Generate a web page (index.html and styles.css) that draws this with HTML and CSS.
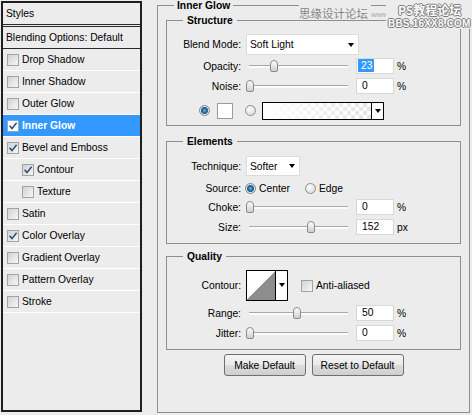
FILE: index.html
```html
<!DOCTYPE html>
<html lang="en">
<head>
<meta charset="utf-8">
<title>Layer Style - Inner Glow</title>
<link rel="stylesheet" href="styles.css">
</head>
<body>
<div class="app">
  <aside class="styles-panel">
    <div class="panel-title">Styles</div>
    <div class="blend-default">Blending Options: Default</div>
    <ul class="effect-list">
      <li class="effect"><span class="cb"></span>Drop Shadow</li>
      <li class="effect"><span class="cb"></span>Inner Shadow</li>
      <li class="effect"><span class="cb"></span>Outer Glow</li>
      <li class="effect selected"><span class="cb on"><svg viewBox="0 0 10 10"><path d="M1.6 4.8 L4 7.6 L8.6 1.8"/></svg></span>Inner Glow</li>
      <li class="effect"><span class="cb on"><svg viewBox="0 0 10 10"><path d="M1.6 4.8 L4 7.6 L8.6 1.8"/></svg></span>Bevel and Emboss</li>
      <li class="effect sub"><span class="cb on"><svg viewBox="0 0 10 10"><path d="M1.6 4.8 L4 7.6 L8.6 1.8"/></svg></span>Contour</li>
      <li class="effect sub"><span class="cb"></span>Texture</li>
      <li class="effect"><span class="cb"></span>Satin</li>
      <li class="effect"><span class="cb on"><svg viewBox="0 0 10 10"><path d="M1.6 4.8 L4 7.6 L8.6 1.8"/></svg></span>Color Overlay</li>
      <li class="effect"><span class="cb"></span>Gradient Overlay</li>
      <li class="effect"><span class="cb"></span>Pattern Overlay</li>
      <li class="effect"><span class="cb"></span>Stroke</li>
    </ul>
  </aside>

  <fieldset class="group main">
    <legend>Inner Glow</legend>

    <fieldset class="group sub-group structure">
      <legend>Structure</legend>
      <div class="row row-select">
        <span class="lbl">Blend Mode:</span>
        <div class="select select-blend"><span>Soft Light</span><i class="arrow"></i></div>
      </div>
      <div class="row row-slider first">
        <span class="lbl">Opacity:</span>
        <div class="slider"><span class="thumb" style="--v:0.25"></span></div>
        <div class="num selected"><span class="sel-text">23</span></div>
        <span class="unit">%</span>
      </div>
      <div class="row row-slider">
        <span class="lbl">Noise:</span>
        <div class="slider"><span class="thumb" style="--v:0"></span></div>
        <div class="num">0</div>
        <span class="unit">%</span>
      </div>
      <div class="row color-row">
        <span class="radio on"></span>
        <span class="swatch"></span>
        <span class="radio radio-grad"></span>
        <div class="grad-bar"><span class="grad-preview"></span><span class="drop-cell"><i class="arrow"></i></span></div>
      </div>
    </fieldset>

    <fieldset class="group sub-group elements">
      <legend>Elements</legend>
      <div class="row row-tech">
        <span class="lbl">Technique:</span>
        <div class="select select-tech"><span>Softer</span><i class="arrow"></i></div>
      </div>
      <div class="row row-source">
        <span class="lbl">Source:</span>
        <span class="radio on"></span><span class="opt">Center</span>
        <span class="radio radio-edge"></span><span class="opt">Edge</span>
      </div>
      <div class="row row-slider">
        <span class="lbl">Choke:</span>
        <div class="slider"><span class="thumb" style="--v:0"></span></div>
        <div class="num">0</div>
        <span class="unit">%</span>
      </div>
      <div class="row row-slider">
        <span class="lbl">Size:</span>
        <div class="slider"><span class="thumb" style="--v:0.65"></span></div>
        <div class="num">152</div>
        <span class="unit">px</span>
      </div>
    </fieldset>

    <fieldset class="group sub-group quality">
      <legend>Quality</legend>
      <div class="row row-contour">
        <span class="lbl">Contour:</span>
        <div class="contour-box"><span class="contour-plot"></span><span class="drop-cell"><i class="arrow"></i></span></div>
        <span class="cb aa"></span><span class="opt">Anti-aliased</span>
      </div>
      <div class="row row-slider">
        <span class="lbl">Range:</span>
        <div class="slider"><span class="thumb" style="--v:0.5"></span></div>
        <div class="num">50</div>
        <span class="unit">%</span>
      </div>
      <div class="row row-slider">
        <span class="lbl">Jitter:</span>
        <div class="slider"><span class="thumb" style="--v:0"></span></div>
        <div class="num">0</div>
        <span class="unit">%</span>
      </div>
    </fieldset>

    <div class="buttons">
      <button class="btn btn-make" type="button">Make Default</button>
      <button class="btn btn-reset" type="button">Reset to Default</button>
    </div>
  </fieldset>
</div>

<div class="wm-site">思缘设计论坛</div>
<div class="wm-url">www.</div>
<div class="wm-bbs">
  <div class="wm-ps">PS教程论坛</div>
  <div class="wm-addr">BBS.16XX8.COM</div>
</div>
</body>
</html>
```

FILE: styles.css
```css
* { box-sizing: border-box; }

html, body { margin: 0; padding: 0; }

body {
  position: relative;
  width: 472px;
  height: 415px;
  overflow: hidden;
  background: #ececec;
  color: #000;
  font-family: "Liberation Sans", Arial, sans-serif;
  font-size: 10.3px;
}

.app {
  display: flex;
  align-items: flex-start;
  gap: 15px;
  padding-left: 1px;
}

/* ---------- left styles list ---------- */
.styles-panel {
  margin-top: 1px;
  width: 141px;
  height: 411px;
  border: 2px solid #1e1e1e;
  background: #ececec;
  flex-shrink: 0;
}

.panel-title {
  height: 24px;
  line-height: 21px;
  padding-left: 3px;
  border-bottom: 3px double #2a2a2a;
}

.blend-default {
  height: 22px;
  line-height: 21px;
  padding-left: 3px;
  border-bottom: 1px solid #2a2a2a;
}

.effect-list { list-style: none; margin: 0; padding: 0; }

.effect {
  height: 22px;
  border-bottom: 1px solid #fff;
  display: flex;
  align-items: center;
  padding-left: 4px;
  gap: 3px;
  white-space: nowrap;
}

.effect.sub { padding-left: 19px; }

.effect.selected {
  background: #3399ff;
  color: #fff;
  font-weight: bold;
}

.cb {
  width: 12px;
  height: 12px;
  flex-shrink: 0;
  border: 1px solid #a2a2a2;
  background: linear-gradient(135deg, #d2d2d2, #f6f6f6);
  display: inline-flex;
}

.cb svg { width: 10px; height: 10px; }
.cb svg path { fill: none; stroke: #2a4a78; stroke-width: 1.5; }

.effect.selected .cb { background: #fff; border-color: #8aa9c9; }

/* ---------- group boxes ---------- */
.group {
  margin: 0;
  border: 1px solid #8e8e8e;
  min-width: 0;
}

.group > legend {
  font-weight: bold;
  line-height: 11px;
  padding: 0 3px;
}

.main {
  width: 313px;
  height: 413px;
  padding: 4px 8px 0;
  flex-shrink: 0;
}

.main > legend { margin-left: 8px; }

.sub-group > legend { margin-left: 16px; padding: 0 4px; }

.structure { padding: 8px 0 6px; }
.elements { margin-top: 10px; padding: 9px 0 8px; }
.quality { margin-top: 7px; padding: 8px 0 8px; }

/* ---------- rows ---------- */
.row {
  display: flex;
  align-items: center;
  white-space: nowrap;
}

.lbl {
  width: 74px;
  margin-right: 5px;
  text-align: right;
  flex-shrink: 0;
}

.row-select { height: 21px; }
.row-slider { height: 16px; margin-top: 4px; }
.row-slider.first { margin-top: 3px; }
.color-row { height: 17px; margin-top: 8px; padding-left: 32px; }
.row-tech { height: 20px; }
.row-source { height: 14px; margin-top: 5px; }
.row-contour { height: 31px; }

/* select boxes */
.select {
  height: 21px;
  display: flex;
  align-items: center;
  padding-left: 3px;
  background: #fff;
  border: 1px solid #dcdcdc;
}

.select-blend { width: 113px; }
.select-tech { width: 54px; height: 20px; }

.select .arrow { margin-left: auto; margin-right: 4px; }

.arrow {
  display: block;
  width: 0;
  height: 0;
  border-left: 3.5px solid transparent;
  border-right: 3.5px solid transparent;
  border-top: 4px solid #000;
}

/* sliders */
.slider {
  position: relative;
  width: 102px;
  height: 16px;
  flex-shrink: 0;
}

.slider::before {
  content: "";
  position: absolute;
  left: 3px;
  right: 0;
  top: 7px;
  height: 2px;
  border-top: 1px solid #a9a9a9;
  background: #fbfbfb;
}

.thumb {
  position: absolute;
  top: 2px;
  left: calc(var(--v) * 94px);
  width: 8px;
  height: 12px;
  border: 1px solid #8a8a8a;
  border-radius: 4px 4px 2px 2px;
  background: linear-gradient(#fdfdfd, #cfcfcf);
}

.num {
  width: 38px;
  height: 16px;
  margin-left: 8px;
  padding-left: 5px;
  line-height: 14px;
  background: #fff;
  border: 1px solid #d8d8d8;
  flex-shrink: 0;
}

.num.selected { padding-left: 1px; }

.sel-text {
  display: inline-block;
  height: 13px;
  line-height: 13px;
  padding: 0 2px 0 3px;
  background: #3399ff;
  color: #fff;
}

.unit { margin-left: 3px; }

/* radios */
.radio {
  width: 11px;
  height: 11px;
  border-radius: 50%;
  border: 1px solid #8f8f8f;
  background: radial-gradient(circle at 40% 35%, #ffffff, #d0d0d0);
  flex-shrink: 0;
}

.radio.on {
  border-color: #7d8790;
  background: radial-gradient(circle at 50% 50%, #6fb2e0 0, #1f5e90 2.6px, #2c6c9c 3.3px, #e9e9e9 3.9px, #cfcfcf 100%);
}

.swatch {
  width: 16px;
  height: 16px;
  margin-left: 7px;
  background: #fff;
  border: 1px solid #9a9a9a;
}

.radio-grad { margin-left: 12px; }

.grad-bar {
  width: 122px;
  height: 18px;
  margin-left: 6px;
  display: flex;
  border: 1px solid #000;
  background: #fff;
}

.grad-preview {
  flex: 1;
  background-image:
    linear-gradient(to right, #ffffff 0%, rgba(255,255,255,0.15) 100%),
    repeating-conic-gradient(#dedede 0 25%, #ffffff 0 50%);
  background-size: 100% 100%, 8px 8px;
}

.drop-cell {
  width: 12px;
  flex-shrink: 0;
  border-left: 1px solid #000;
  background: #fff;
  display: flex;
  align-items: center;
  justify-content: center;
}

.opt { margin-left: 3px; }
.row-source .radio.on { margin-left: -1px; }
.radio-edge { margin-left: 15px; }

/* contour */
.contour-box {
  width: 42px;
  height: 31px;
  display: flex;
  border: 1px solid #000;
  background: #fff;
  flex-shrink: 0;
}

.contour-plot {
  flex: 1;
  background: linear-gradient(to top left, #8d8d8d 50%, #ffffff 50%);
}

.contour-box .drop-cell { align-items: flex-start; padding-top: 12px; }

.cb.aa { margin-left: 13px; }

/* buttons */
.buttons {
  display: flex;
  justify-content: center;
  gap: 6px;
  margin-top: 4px;
}

.btn {
  height: 22px;
  padding: 0;
  font: inherit;
  color: #000;
  border: 1px solid #707070;
  border-radius: 3px;
  background: linear-gradient(#f4f4f4 0%, #ebebeb 48%, #dcdcdc 52%, #cfcfcf 100%);
}

.btn-make { width: 82px; }
.btn-reset { width: 92px; }

/* ---------- watermark overlay ---------- */
.wm-site {
  position: absolute;
  left: 299px;
  top: 0;
  width: 72px;
  height: 19px;
  padding-top: 7px;
  background: #ececec;
  color: #858585;
  font-family: "Noto Sans CJK SC", "Noto Sans", sans-serif;
  font-size: 11.5px;
  line-height: 12px;
  white-space: nowrap;
}

.wm-url {
  position: absolute;
  left: 371px;
  top: 10px;
  color: #a8a8a8;
  font-size: 8px;
  line-height: 9px;
  white-space: nowrap;
}

.wm-bbs {
  position: absolute;
  left: 386px;
  top: 0;
  width: 86px;
  height: 29px;
  background: #ececec;
  color: #fafafa;
  text-shadow: 1px 0 #7c7c7c, -1px 0 #7c7c7c, 0 1px #7c7c7c, 0 -1px #7c7c7c;
  white-space: nowrap;
}

.wm-ps {
  margin: 3px 0 0 12px;
  font-family: "Noto Sans CJK SC", "Noto Sans", sans-serif;
  font-size: 12px;
  line-height: 13px;
  height: 13px;
  font-weight: bold;
}

.wm-addr {
  margin: 3px 0 0 2px;
  font-family: "Liberation Sans", Arial, sans-serif;
  font-size: 10px;
  font-weight: bold;
  line-height: 9px;
  height: 9px;
  letter-spacing: 0.2px;
}
```
